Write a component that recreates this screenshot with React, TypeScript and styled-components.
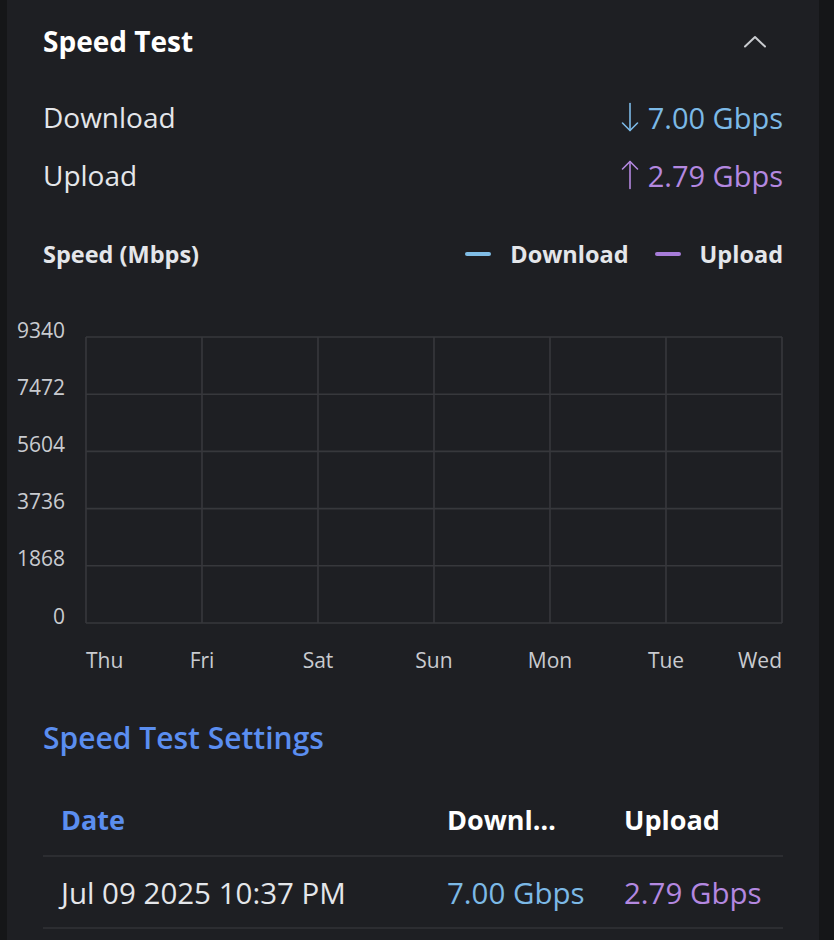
import styled, { createGlobalStyle } from 'styled-components';

const GlobalStyle = createGlobalStyle`
  html, body {
    margin: 0;
    padding: 0;
    background: #151618;
  }
  body {
    font-family: "Open Sans", "Noto Sans", sans-serif;
    color: #e4e6ea;
  }
`;

const BLUE = '#7cb9e6';
const PURPLE = '#b488e0';
const LINK = '#5b8ef0';
const GRID = '#37383c';

const Page = styled.div`
  display: flex;
  min-height: 940px;
`;

const Panel = styled.section`
  margin-left: 7px;
  width: 812px;
  box-sizing: border-box;
  padding: 0 36px;
  background: #1e1f23;
  min-height: 940px;
`;

const Header = styled.header`
  display: flex;
  align-items: center;
  justify-content: space-between;
  height: 82px;
`;

const Title = styled.h2`
  margin: 0;
  font-size: 28px;
  font-weight: 700;
  color: #ffffff;
`;

const CollapseButton = styled.button`
  width: 56px;
  height: 56px;
  display: flex;
  align-items: center;
  justify-content: center;
  padding: 0;
  border: 0;
  background: none;
  color: #c9cbcf;
  cursor: pointer;
`;

const Stats = styled.div`
  margin-top: 6px;
`;

const StatRow = styled.div`
  display: flex;
  align-items: center;
  justify-content: space-between;
  height: 58px;
  font-size: 28px;
`;

const StatValue = styled.span<{ $color: string }>`
  display: flex;
  align-items: center;
  gap: 9px;
  font-size: 29px;
  color: ${(p) => p.$color};
`;

const ChartHeader = styled.div`
  display: flex;
  align-items: center;
  justify-content: space-between;
  height: 44px;
  margin-top: 28px;
  font-size: 23.5px;
  font-weight: 700;
`;

const Legend = styled.div`
  display: flex;
  align-items: center;
  gap: 26px;
`;

const LegendItem = styled.span`
  display: flex;
  align-items: center;
  gap: 19px;
`;

const Swatch = styled.span<{ $color: string }>`
  width: 26px;
  height: 4px;
  border-radius: 2px;
  background: ${(p) => p.$color};
`;

const ChartSvg = styled.svg`
  display: block;
  margin-left: -36px;
  font-size: 21px;
`;

const SettingsLink = styled.a`
  display: flex;
  align-items: center;
  height: 48px;
  margin-top: 23px;
  font-size: 30px;
  font-weight: 600;
  color: ${LINK};
  text-decoration: none;
`;

const Table = styled.table`
  width: 100%;
  margin-top: 22px;
  border-collapse: collapse;
  table-layout: fixed;
`;

const Th = styled.th<{ $active?: boolean; $reserve?: number }>`
  height: 72px;
  padding: 0 ${(p) => p.$reserve ?? 18}px 0 18px;
  text-align: left;
  font-size: 27px;
  font-weight: 700;
  color: ${(p) => (p.$active ? LINK : '#ffffff')};
  border-bottom: 2px solid #2c2d31;
  white-space: nowrap;
  overflow: hidden;
  text-overflow: ellipsis;
`;

const Td = styled.td<{ $color?: string }>`
  height: 70px;
  padding: 0 18px;
  font-size: 29.5px;
  color: ${(p) => p.$color ?? '#e4e6ea'};
  border-bottom: 2px solid #2c2d31;
  white-space: nowrap;
`;

const Arrow = ({ up }: { up?: boolean }) => (
  <svg width="18" height="30" viewBox="0 0 18 30" fill="none" stroke="currentColor" strokeWidth="1.6" strokeLinecap="round" strokeLinejoin="round">
    {up ? (
      <>
        <path d="M9 1.5V28.5" />
        <path d="M1.5 9L9 1.5L16.5 9" />
      </>
    ) : (
      <>
        <path d="M9 1.5V28.5" />
        <path d="M1.5 21L9 28.5L16.5 21" />
      </>
    )}
  </svg>
);

const ChevronUp = () => (
  <svg width="24" height="13" viewBox="0 0 24 13" fill="none" stroke="currentColor" strokeWidth="2" strokeLinecap="round" strokeLinejoin="round">
    <path d="M2 11.5L12 2L22 11.5" />
  </svg>
);

const yTicks = [9340, 7472, 5604, 3736, 1868, 0];
const days = ['Thu', 'Fri', 'Sat', 'Sun', 'Mon', 'Tue', 'Wed'];

const SpeedChart = () => {
  const left = 79;
  const top = 61;
  const w = 696;
  const h = 286;
  const stepX = w / 6;
  const stepY = h / 5;
  return (
    <ChartSvg width="776" height="414" viewBox="0 0 776 414">
      {yTicks.map((_, i) => (
        <line key={'h' + i} x1={left} x2={left + w} y1={top + stepY * i} y2={top + stepY * i} stroke={GRID} strokeWidth="1.6" />
      ))}
      {days.map((_, i) => (
        <line key={'v' + i} x1={left + stepX * i} x2={left + stepX * i} y1={top} y2={top + h} stroke={GRID} strokeWidth="1.6" />
      ))}
      {yTicks.map((t, i) => (
        <text key={t} x={58} y={top - 5 + stepY * i} textAnchor="end" dominantBaseline="middle" fill="#c9cbd0">
          {t}
        </text>
      ))}
      {days.map((d, i) => (
        <text
          key={d}
          x={left + stepX * i}
          y={386}
          textAnchor={i === 0 ? 'start' : i === days.length - 1 ? 'end' : 'middle'}
          dominantBaseline="middle"
          fill="#c9cbd0"
        >
          {d}
        </text>
      ))}
    </ChartSvg>
  );
};

export default function App() {
  return (
    <>
      <GlobalStyle />
      <Page>
        <Panel>
          <Header>
            <Title>Speed Test</Title>
            <CollapseButton aria-label="Collapse">
              <ChevronUp />
            </CollapseButton>
          </Header>

          <Stats>
            <StatRow>
              <span>Download</span>
              <StatValue $color={BLUE}>
                <Arrow />
                7.00 Gbps
              </StatValue>
            </StatRow>
            <StatRow>
              <span>Upload</span>
              <StatValue $color={PURPLE}>
                <Arrow up />
                2.79 Gbps
              </StatValue>
            </StatRow>
          </Stats>

          <ChartHeader>
            <span>Speed (Mbps)</span>
            <Legend>
              <LegendItem>
                <Swatch $color="#80bde6" />
                Download
              </LegendItem>
              <LegendItem>
                <Swatch $color="#a77cd9" />
                Upload
              </LegendItem>
            </Legend>
          </ChartHeader>

          <SpeedChart />

          <SettingsLink href="#">Speed Test Settings</SettingsLink>

          <Table>
            <colgroup>
              <col style={{ width: 386 }} />
              <col style={{ width: 177 }} />
              <col style={{ width: 177 }} />
            </colgroup>
            <thead>
              <tr>
                <Th $active>Date</Th>
                <Th $reserve={44}>Download</Th>
                <Th>Upload</Th>
              </tr>
            </thead>
            <tbody>
              <tr>
                <Td>Jul 09 2025 10:37 PM</Td>
                <Td $color={BLUE}>7.00 Gbps</Td>
                <Td $color={PURPLE}>2.79 Gbps</Td>
              </tr>
            </tbody>
          </Table>
        </Panel>
      </Page>
    </>
  );
}
